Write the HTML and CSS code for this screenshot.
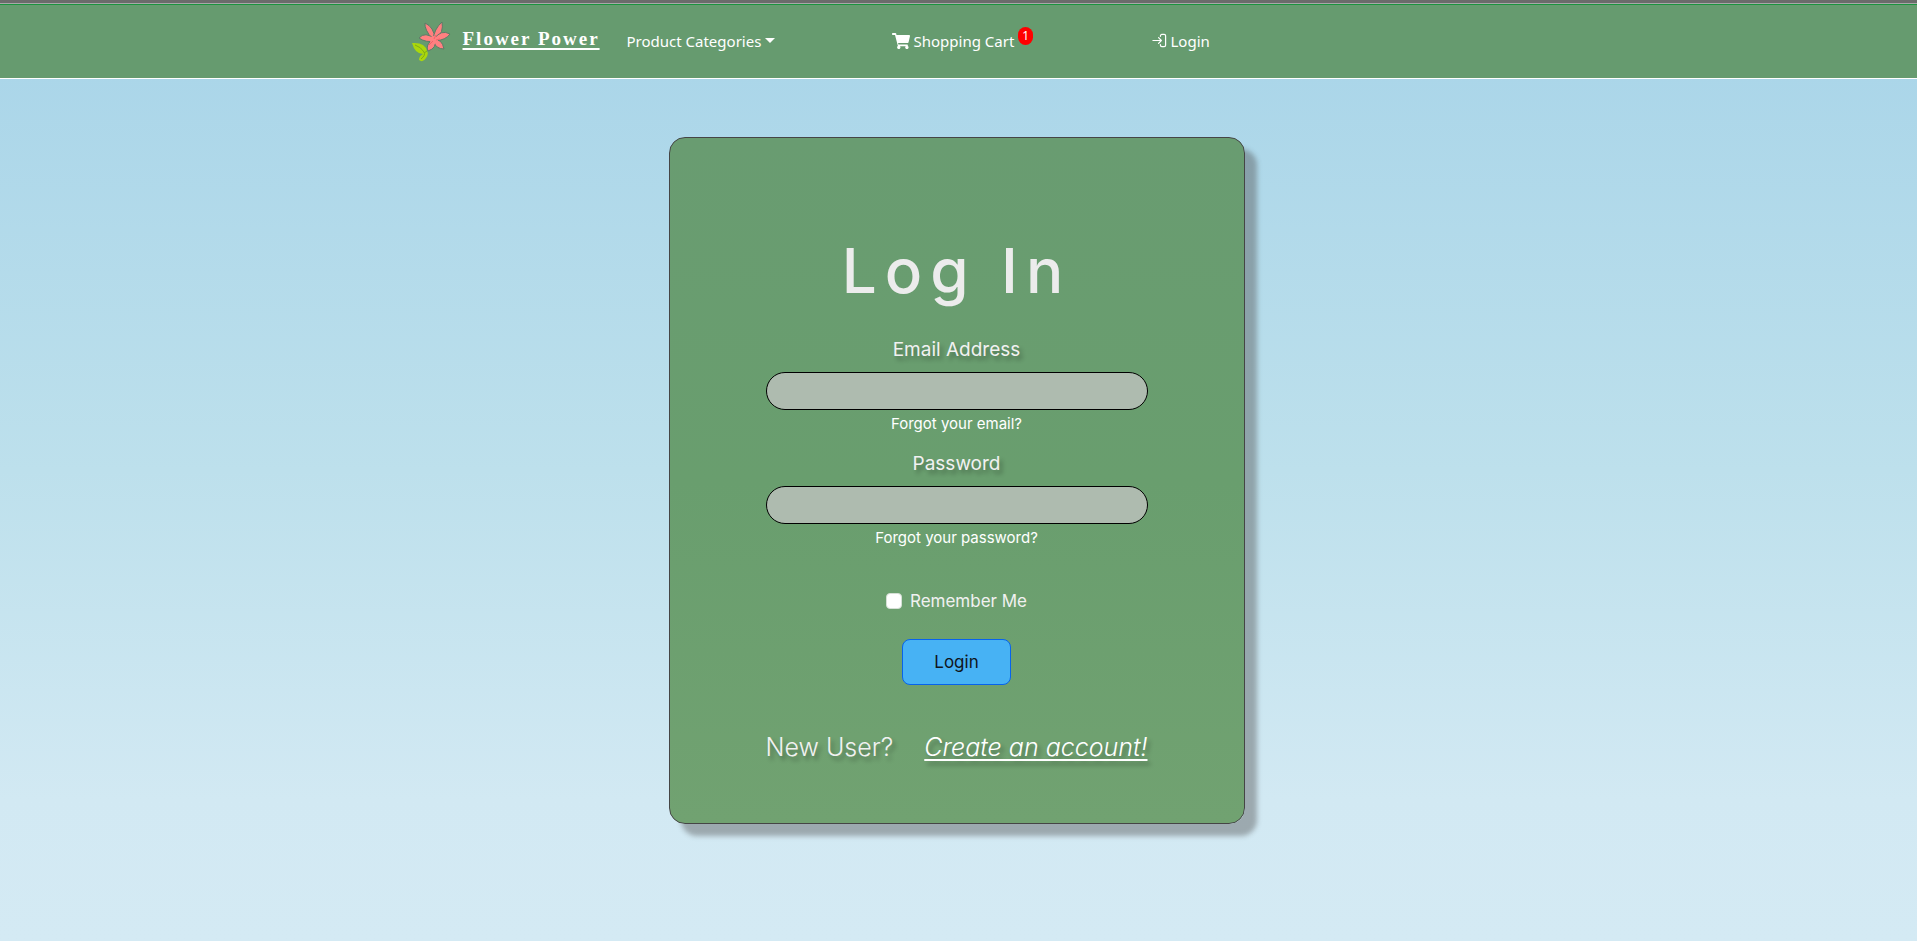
FILE: index.html
```html
<!DOCTYPE html>
<html lang="en">
<head>
<meta charset="utf-8">
<meta name="viewport" content="width=device-width, initial-scale=1">
<title>Flower Power</title>
<link rel="stylesheet" href="styles.css">
</head>
<body>
<header class="navbar">
  <nav class="nav-inner">
    <a class="brand" href="#">
      <svg class="logo" viewBox="0 0 40 42" aria-hidden="true">
        <g fill="#ff8080" stroke="#5c7b68" stroke-width="1">
          <path d="M22 20 Q13 9 14 3 Q23 7 24 19Z"/>
          <path d="M22 20 Q23 9 31 2 Q33 12 25 20Z"/>
          <path d="M23 19 Q30 9 39 14 Q35 20 24 21Z"/>
          <path d="M22 20 Q31 18 33 29 Q25 29 22 21Z"/>
          <path d="M24 20 Q26 28 17 31 Q14 25 22 19Z"/>
          <path d="M24 21 Q15 23 8 18 Q14 11 24 19Z"/>
        </g>
        <circle cx="23" cy="20" r="4" fill="#ff8080"/>
        <path d="M22 21 18 25M23 19l2-4M25 20l4-1" stroke="#f0626b" fill="none"/>
        <path d="M1 23 Q14 22 16 31 Q18 34 15 38 Q12 43 8 40 Q8 36 12 34 Q4 34 1 23Z" fill="#abd70b"/>
        <path d="M4 25 Q10 27 13 32 15 35 10 39M13 33l3-2" stroke="#7fac16" fill="none"/>
      </svg>
      <span class="brand-name">Flower Power</span>
    </a>
    <button class="nav-item" type="button">Product Categories<span class="caret"></span></button>
    <a class="nav-item" href="#">
      <svg class="cart" viewBox="0 0 18 16" aria-hidden="true"><path fill="currentColor" d="M.7 0h2.7c.4 0 .7.2.8.6L4.500 2h12.700c.5 0 .9.500.8 1l-1.500 6.500c-.1.3-.4.5-.7.5H6.100l.3 1.500h8.800c.5 0 .8.4.7.9l-.2.700a1.600 1.600 0 1 1-1.900.200H7.900a1.600 1.600 0 1 1-2-.200L3 2H.7C.3 2 0 1.700 0 1.300V.7C0 .3.300 0 .700 0z"/></svg>
      <span>Shopping Cart</span><span class="badge">1</span>
    </a>
    <a class="nav-item" href="#">
      <svg class="enter" viewBox="0 0 16 16" fill="none" stroke="currentColor" stroke-width="1.300" stroke-linecap="round" stroke-linejoin="round" aria-hidden="true"><path d="M9 3.500V3a1.500 1.500 0 0 1 1.500-1.500H13A1.500 1.500 0 0 1 14.500 3v10a1.500 1.500 0 0 1-1.500 1.500h-2.500A1.500 1.500 0 0 1 9 13v-.500M1 8h9M7 5l3 3-3 3"/></svg>
      <span>Login</span>
    </a>
  </nav>
</header>
<main>
  <form class="card">
    <h1>Log In</h1>
    <div class="field">
      <label for="email">Email Address</label>
      <input class="text-box" id="email" type="email">
      <a class="hint" href="#">Forgot your email?</a>
    </div>
    <div class="field">
      <label for="password">Password</label>
      <input class="text-box" id="password" type="password">
      <a class="hint" href="#">Forgot your password?</a>
    </div>
    <div class="remember">
      <input id="remember" type="checkbox">
      <label for="remember">Remember Me</label>
    </div>
    <button class="submit" type="submit">Login</button>
    <p class="signup"><span>New User?</span><a href="#">Create an account!</a></p>
  </form>
</main>
</body>
</html>
```
FILE: styles.css
```css
* { box-sizing: border-box; }

body {
  margin: 0;
  min-height: 100vh;
  background: linear-gradient(#abd6e9 8%, #bde0ec 50%, #d2e9f3 85%, #d4eaf4);
  color: #f1f1f1;
  font-family: Inter, "Liberation Sans", sans-serif;
}

.navbar {
  border-top: 3px solid #6b6b6b;
  border-bottom: 1px solid #fff;
  background: #669b6f;
  box-shadow: inset 0 1px #a8a8a8, inset 0 2px #1b933e;
  font-family: "Noto Sans", "Open Sans", sans-serif;
}

.nav-inner {
  display: grid;
  grid-template-columns: 216px 265px 260px 1fr;
  align-items: center;
  max-width: 1096px;
  min-height: 75px;
  margin: 0 auto;
}

.brand {
  display: flex;
  align-items: center;
  gap: 12px;
  color: #fff;
  text-decoration: none;
}

.logo { width: 40px; height: 42px; }

.brand-name {
  padding-bottom: 4px;
  font: bold 19px/24px "Liberation Serif", serif;
  letter-spacing: 2px;
  text-decoration: underline;
  text-decoration-thickness: 2px;
  text-underline-offset: 3px;
}

.nav-item {
  display: flex;
  align-items: center;
  gap: 4px;
  padding: 0;
  border: 0;
  background: none;
  color: #fff;
  font: 15px/24px "Noto Sans", "Open Sans", sans-serif;
  text-decoration: none;
  white-space: nowrap;
}

.caret {
  border: 5px solid transparent;
  border-top-color: #fff;
  border-bottom: 0;
}

.cart { width: 18px; height: 16px; }
.enter { width: 15px; height: 15px; }

.badge {
  align-self: flex-start;
  margin-top: -2px;
  padding: 0 4px;
  border-radius: 9px;
  background: #f00;
  font-size: 12px;
  line-height: 18px;
}

main { padding: 58px 20px 58px 16px; }

.card {
  display: flex;
  flex-direction: column;
  align-items: center;
  width: 30%;
  min-width: 576px;
  margin: 0 auto;
  padding: 97px 96px 58px;
  border: 1px solid #454545;
  border-radius: 16px;
  background: linear-gradient(#699c71, #699e6e 50%, #71a271);
  box-shadow: 12px 12px 5px rgba(80, 80, 80, 0.42);
}

h1 {
  margin: 0 0 29px;
  color: #ececec;
  font-size: 62px;
  font-weight: 500;
  line-height: 72px;
  letter-spacing: 8px;
}

.field {
  display: flex;
  flex-direction: column;
  align-items: center;
  width: 100%;
  margin-bottom: 14px;
}

.field label {
  margin-bottom: 8px;
  font-size: 19px;
  line-height: 28px;
  text-shadow: 3px 4px 4px rgba(0, 0, 0, 0.3);
}

.text-box {
  width: 100%;
  height: 38px;
  padding: 6px 16px;
  border: 1px solid #000;
  border-radius: 19px;
  background: #aebbaf;
  font: inherit;
}

.hint {
  margin-top: 2px;
  color: #fff;
  font-size: 15px;
  line-height: 24px;
  text-decoration: none;
}

.remember {
  display: flex;
  align-items: center;
  gap: 8px;
  margin: 25px 0 26px;
  font-size: 17px;
  line-height: 24px;
}

.remember input {
  appearance: none;
  width: 16px;
  height: 16px;
  margin: 0;
  border: 1px solid #d5dfd5;
  border-radius: 4px;
  background: #fff;
}

.remember input:checked { background: #0d6efd; }

.submit {
  padding: 10px 31px;
  border: 1px solid #0763ed;
  border-radius: 8px;
  background: #47b2f4;
  color: #10151c;
  font: 17px/24px Inter, sans-serif;
}

.signup {
  display: flex;
  justify-content: space-between;
  width: 100%;
  margin: 44px 0 0;
  font-size: 25px;
  font-weight: 300;
  line-height: 36px;
  white-space: nowrap;
  text-shadow: 3px 4px 4px rgba(0, 0, 0, 0.3);
}

.signup a {
  color: #fff;
  font-style: italic;
  text-decoration-thickness: 2px;
  text-underline-offset: 3px;
}
```
